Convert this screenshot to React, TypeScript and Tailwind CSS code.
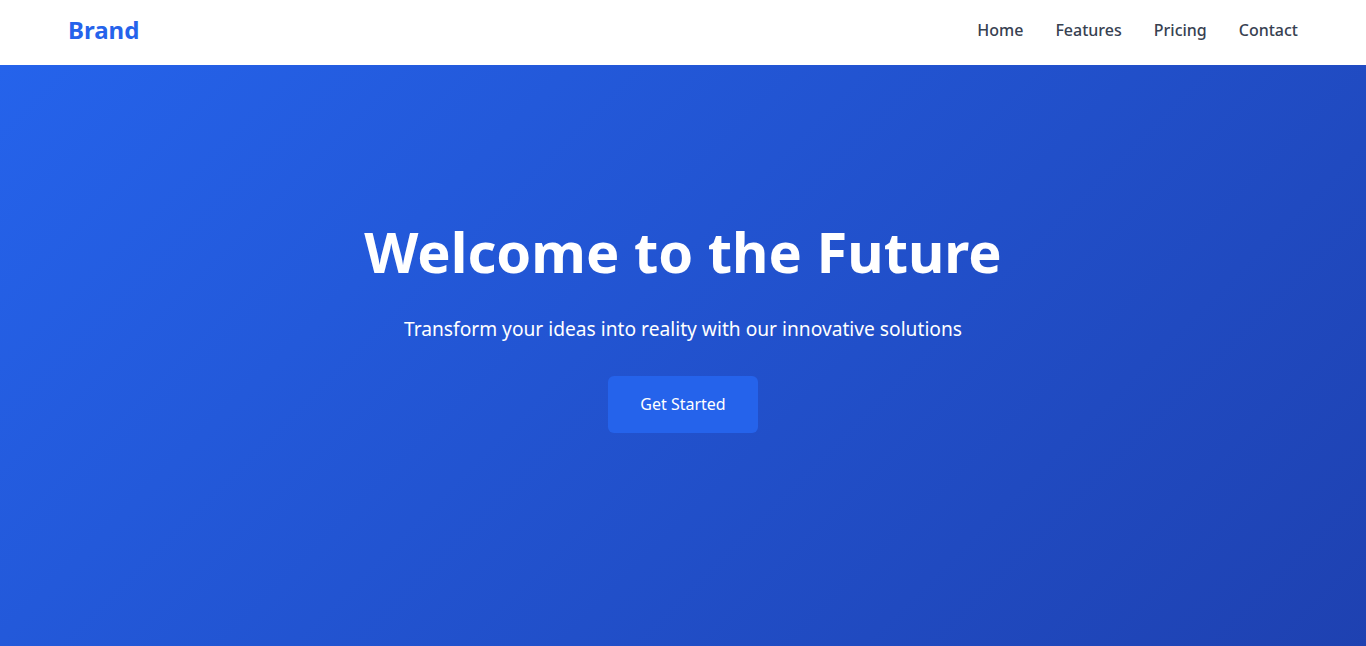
import React from "react";

export default function App() {
  const links = ["Home", "Features", "Pricing", "Contact"];
  return (
    <div className="min-h-screen bg-white" style={{ fontFamily: '"Noto Sans", "Open Sans", sans-serif' }}>
      <header className="bg-white">
        <div className="max-w-7xl mx-auto px-[25px] pt-[14px] pb-[19px] flex items-center justify-between">
          <a className="text-2xl leading-8 font-bold text-[#2563eb]">Brand</a>
          <nav className="flex items-center gap-8">
            {links.map((l) => (
              <a key={l} className="text-base font-medium text-[#374151]">
                {l}
              </a>
            ))}
          </nav>
        </div>
      </header>
      <section className="min-h-screen bg-[linear-gradient(135deg,#2563eb_0%,#1e40af_100%)] text-white">
        <div className="max-w-7xl mx-auto px-6 pt-[158px] pb-40 flex flex-col items-center text-center">
          <h1 className="text-[56px] leading-none font-bold mb-[34px]">Welcome to the Future</h1>
          <p className="text-[19.2px] leading-[31px] mb-[32px] text-white">
            Transform your ideas into reality with our innovative solutions
          </p>
          <button className="bg-[#2563eb] text-white px-8 py-4 leading-[25px] rounded-md text-base">Get Started</button>
        </div>
      </section>
    </div>
  );
}
